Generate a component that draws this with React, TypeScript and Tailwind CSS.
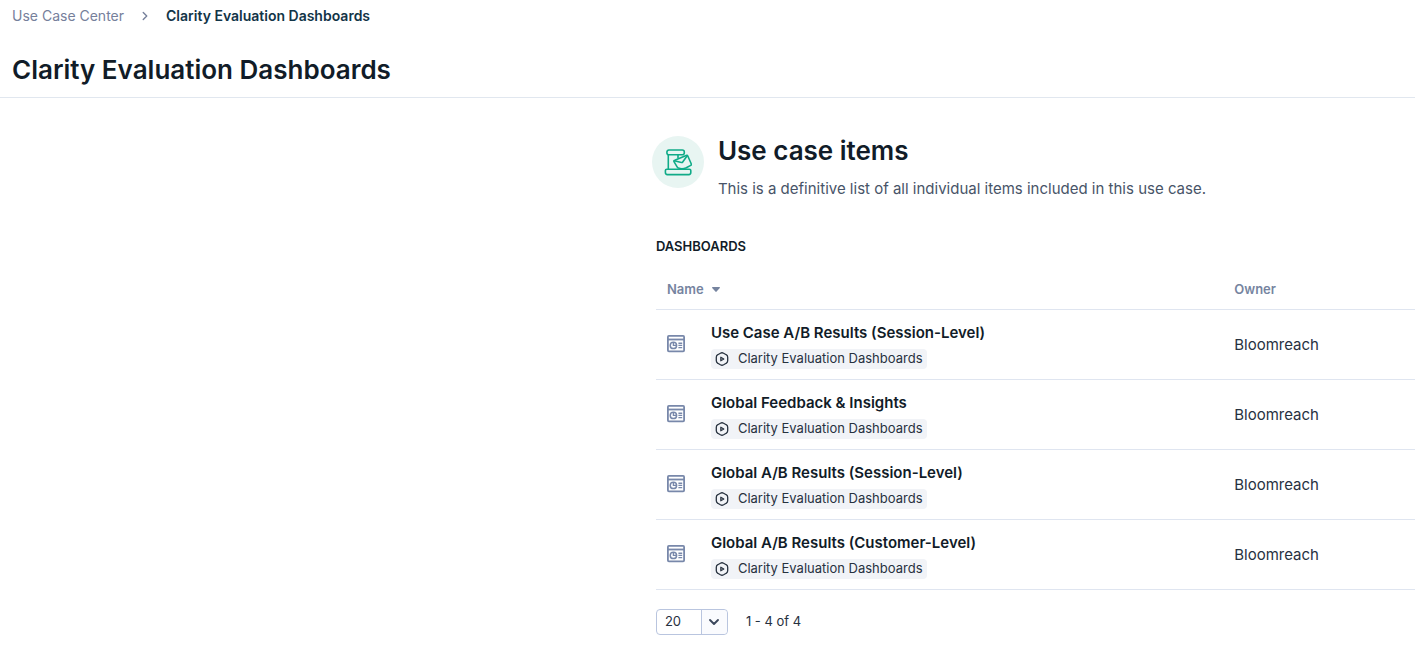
import { useState } from "react";
import { ChevronDown, ChevronRight } from "lucide-react";

interface DashboardItem {
  id: number;
  name: string;
  useCase: string;
  owner: string;
}

const DASHBOARDS: DashboardItem[] = [
  { id: 1, name: "Use Case A/B Results (Session-Level)", useCase: "Clarity Evaluation Dashboards", owner: "Bloomreach" },
  { id: 2, name: "Global Feedback & Insights", useCase: "Clarity Evaluation Dashboards", owner: "Bloomreach" },
  { id: 3, name: "Global A/B Results (Session-Level)", useCase: "Clarity Evaluation Dashboards", owner: "Bloomreach" },
  { id: 4, name: "Global A/B Results (Customer-Level)", useCase: "Clarity Evaluation Dashboards", owner: "Bloomreach" },
];

function MailboxIcon() {
  return (
    <svg viewBox="0 0 28 28" className="w-7 h-7" fill="none" stroke="#10ab88" strokeWidth="1.6" strokeLinejoin="round" strokeLinecap="round" aria-hidden="true">
      <path d="M4.9 2h13.4a2 2 0 0 1 2 2v.8a2 2 0 0 1-2 2H4.9a2 2 0 0 1-2-2V4a2 2 0 0 1 2-2Z" />
      <path d="M4.3 6.8v14.4M14 6.8v3" />
      <path d="M10.8 12.2 22.2 7.6c.7-.3 1.4 0 1.7.7l3.3 7.5c.3.7.1 1.3-.5 1.6l-4.4 2.4c-2.5 1.2-5.5 1.3-8 .3-.6-.3-1-.7-1.2-1.3L10 13.7c-.2-.7.1-1.3.8-1.5Z" />
      <path d="m10.2 12.8 7.2 1.7c.6.1 1 0 1.3-.5l4.5-6.2" />
      <path d="M2.8 21.2h22.6a1.4 1.4 0 0 1 1.4 1.4v2a2 2 0 0 1-2 2H3.4a2 2 0 0 1-2-2v-2a1.4 1.4 0 0 1 1.4-1.4Z" />
    </svg>
  );
}

function DashboardIcon() {
  return (
    <svg viewBox="0 0 18 18" className="w-[18px] h-[18px]" fill="none" stroke="#7888aa" strokeWidth="1.8" aria-hidden="true">
      <rect x="0.9" y="0.9" width="16.2" height="15.4" rx="1" />
      <path d="M1 4.5h16" />
      <circle cx="6.4" cy="10.4" r="3.2" strokeWidth="1.5" />
      <path d="M6.4 7.4v3h3" strokeWidth="1.3" />
      <path d="M11.4 8.2h3.8M11.4 10.4h3.8M11.4 12.6h3.8" strokeWidth="1.4" />
    </svg>
  );
}

function UseCaseIcon() {
  return (
    <svg viewBox="0 0 14 14" className="w-3.5 h-3.5" fill="none" stroke="#27313f" strokeWidth="1.3" strokeLinejoin="round" aria-hidden="true">
      <path d="M5.4 1.2a3.4 3.4 0 0 1 3.2 0l2.6 1.5a2.8 2.8 0 0 1 1.5 2.5v3.6a2.8 2.8 0 0 1-1.5 2.5l-2.6 1.5a3.4 3.4 0 0 1-3.2 0l-2.6-1.5a2.8 2.8 0 0 1-1.5-2.5V5.2a2.8 2.8 0 0 1 1.5-2.5Z" />
      <path d="M5.8 5.2v3.6L8.8 7Z" strokeWidth="1.2" />
    </svg>
  );
}

export default function App() {
  const [pageSize, setPageSize] = useState("20");
  const [ascending, setAscending] = useState(true);

  const rows = ascending ? DASHBOARDS : [...DASHBOARDS].reverse();

  return (
    <div className="min-h-screen bg-white font-['Inter',sans-serif] text-[#111c28]">
      <header className="px-3 border-b border-[#e1e7ef]">
        <nav aria-label="Breadcrumb" className="flex items-center h-8 text-sm">
          <a href="#use-cases" className="text-[#76809b]">Use Case Center</a>
          <ChevronRight className="w-3.5 h-3.5 mx-3.5 text-[#76809b]" strokeWidth={2.4} />
          <span className="font-semibold text-[#123447]">Clarity Evaluation Dashboards</span>
        </nav>
        <h1 className="pt-[22px] pb-[11px] text-[26px] leading-8 font-semibold">Clarity Evaluation Dashboards</h1>
      </header>

      <main className="ml-[46%] pt-[37px]">
        <div className="flex items-start gap-3.5 pl-px">
          <div className="flex items-center justify-center shrink-0 w-[52px] h-[52px] mt-px rounded-full bg-[#e8f5f2]">
            <MailboxIcon />
          </div>
          <div>
            <h2 className="text-[26px] leading-8 font-semibold">Use case items</h2>
            <p className="mt-2.5 text-[15px] leading-6 text-[#485468]">
              This is a definitive list of all individual items included in this use case.
            </p>
          </div>
        </div>

        <section className="pl-[5px] mt-[35px]">
          <h3 className="text-[13px] leading-5 font-semibold">DASHBOARDS</h3>

          <table className="w-full mt-3 table-fixed border-collapse text-left">
            <colgroup>
              <col className="w-[55px]" />
              <col />
              <col className="w-[25%]" />
            </colgroup>
            <thead>
              <tr className="h-[41px] border-b border-[#dfe5f0] text-[13px] text-[#76849f]">
                <th colSpan={2} className="pt-0.5 pl-[11px] font-semibold">
                  <button type="button" onClick={() => setAscending(!ascending)} className="flex items-center gap-2">
                    Name
                    <svg viewBox="0 0 8 5" className="w-2 h-[5px]" fill="currentColor" aria-hidden="true">
                      <path d="M0.6 0h6.8c.5 0 .7.5.4.9L4.6 4.6a.8.8 0 0 1-1.2 0L.2.9C-.1.5.1 0 .6 0Z" />
                    </svg>
                  </button>
                </th>
                <th className="pt-0.5 pl-[9px] font-semibold">Owner</th>
              </tr>
            </thead>
            <tbody>
              {rows.map((item) => (
                <tr key={item.id} className="h-[70px] border-b border-[#dfe5f0]">
                  <td className="pl-[11px]">
                    <DashboardIcon />
                  </td>
                  <td className="pt-1">
                    <div className="text-[15px] leading-6 font-semibold">{item.name}</div>
                    <div className="inline-flex items-center gap-[9px] h-5 mt-1 px-1 rounded bg-[#f1f3f7] text-[13px] text-[#27313f]">
                      <UseCaseIcon />
                      {item.useCase}
                    </div>
                  </td>
                  <td className="pt-[3px] pl-[9px] text-[15px] text-[#27313f]">{item.owner}</td>
                </tr>
              ))}
            </tbody>
          </table>

          <div className="flex items-center gap-[18px] mt-[19px] text-[13px] text-[#27313f]">
            <div className="relative">
              <select
                aria-label="Rows per page"
                value={pageSize}
                onChange={(e) => setPageSize(e.target.value)}
                className="block w-[72px] h-[26px] pl-2 rounded border border-[#b9c5df] bg-white appearance-none"
              >
                <option value="10">10</option>
                <option value="20">20</option>
                <option value="50">50</option>
              </select>
              <span className="absolute inset-y-px right-px flex items-center justify-center w-[26px] rounded-r border-l border-[#b9c5df] bg-[#fafbfe] pointer-events-none">
                <ChevronDown className="w-4 h-4 text-[#3b475c]" strokeWidth={2.8} />
              </span>
            </div>
            <span>1 - 4 of 4</span>
          </div>
        </section>
      </main>
    </div>
  );
}
